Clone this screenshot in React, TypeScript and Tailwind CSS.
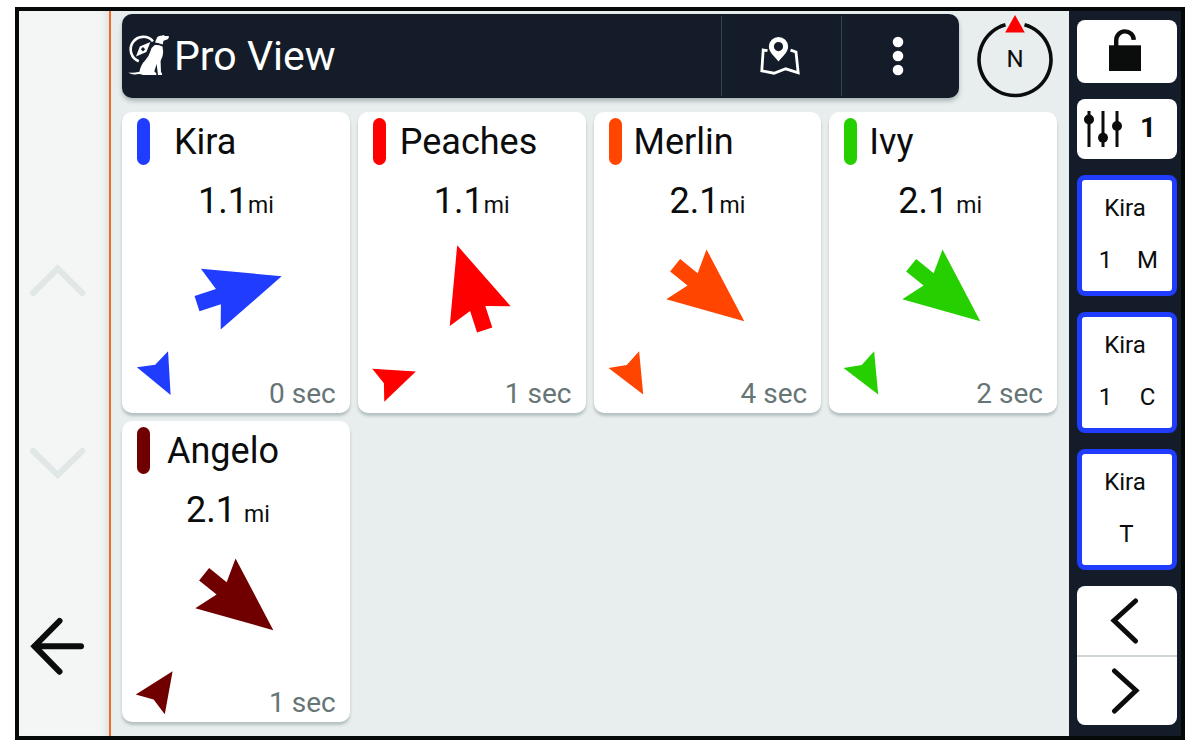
import React from 'react';

interface Dog {
  name: string;
  distance: string;
  updated: string;
  color: string;
  // degrees clockwise from straight up
  bearing: number;
  heading: number;
  nameClass: string;
  distanceClass: string;
}

interface QuickKey {
  label: string;
  codes: string[];
}

const dogs: Dog[] = [
  { name: 'Kira', distance: '1.1', updated: '0 sec', color: '#1f3cff', bearing: 72, heading: 153, nameClass: 'pl-6', distanceClass: '' },
  { name: 'Peaches', distance: '1.1', updated: '1 sec', color: '#ff0000', bearing: -18, heading: 70, nameClass: 'pl-3.5', distanceClass: '' },
  { name: 'Merlin', distance: '2.1', updated: '4 sec', color: '#ff4500', bearing: 129, heading: 151, nameClass: 'pl-3', distanceClass: '' },
  { name: 'Ivy', distance: '2.1', updated: '2 sec', color: '#26d000', bearing: 129, heading: 151, nameClass: 'pl-3', distanceClass: 'gap-2 pr-1.5' },
  { name: 'Angelo', distance: '2.1', updated: '1 sec', color: '#700000', bearing: 129, heading: 34, nameClass: 'pl-[17px]', distanceClass: 'gap-2 pr-4' },
];

const quickKeys: QuickKey[] = [
  { label: 'Kira', codes: ['1', 'M'] },
  { label: 'Kira', codes: ['1', 'C'] },
  { label: 'Kira', codes: ['T'] },
];

function DogLogo() {
  return (
    <svg viewBox="0 0 42 42" className="h-[42px] w-[42px] shrink-0" aria-hidden="true">
      <path d="M25 6.4 A12.6 12.6 0 1 0 10.8 26.2" fill="none" stroke="white" strokeWidth="2.6" />
      <path fillRule="evenodd" d="M22.4 7 L18.4 17 L8 21.4 L11.8 11.4 Z M15 12 L12.8 14.3 L15 16.6 L17.2 14.3 Z" fill="white" />
      <path d="M27 7.5 L29 2.5 Q30.5 .3 33.5 .8 L36 0 L36.5 1 L40.8 1 Q41.2 4 38.5 4.7 L35.5 5.8 L34.7 9.5 Q31 8 27 7.5 Z" fill="white" />
      <path
        d="M26.7 10 Q30.5 9.6 34.5 11.4 Q35.8 17 34.6 21 L32.6 26 L33 37 L34 38.5 V40 H30 L28.6 29 L26.3 36.5 L28.3 38.3 V40 H15 Q12 38.4 9 39.2 Q4 40.2 .3 37.6 Q6 38 11.5 36.8 Q12.5 30 17.5 25 Q21 21 22.3 16.5 Q23.5 12 26.7 10 Z"
        fill="white"
      />
    </svg>
  );
}

function MapPinIcon() {
  return (
    <svg viewBox="0 0 40 40" className="h-10 w-10" aria-hidden="true">
      <path
        d="M7.5 14.7 L3.2 14 L1.8 34.8 L14 37.2 L25.7 32.8 L38.2 36.8 L36 16 L30.5 14.2"
        fill="none"
        stroke="white"
        strokeWidth="2.8"
      />
      <path
        fillRule="evenodd"
        d="M18.5 1 A9.6 9.6 0 0 1 28.1 10.6 C28.1 16.5 22 21 18.5 25.6 C15 21 8.9 16.5 8.9 10.6 A9.6 9.6 0 0 1 18.5 1 Z M18.5 6 A4.6 4.6 0 1 0 18.5 15.2 A4.6 4.6 0 1 0 18.5 6 Z"
        fill="white"
      />
    </svg>
  );
}

function MoreIcon() {
  return (
    <svg viewBox="0 0 12 40" className="h-10 w-3" aria-hidden="true">
      <circle cx="6" cy="6" r="5.3" fill="white" />
      <circle cx="6" cy="20" r="5.3" fill="white" />
      <circle cx="6" cy="34" r="5.3" fill="white" />
    </svg>
  );
}

function Compass() {
  return (
    <div className="relative mr-1 h-[84px] w-[76px] shrink-0">
      <svg viewBox="0 0 76 84" className="h-full w-full" aria-hidden="true">
        <path d="M47.5 10.8 A36 36 0 1 1 28.5 10.8" fill="none" stroke="#0b0d0d" strokeWidth="3.6" />
        <path d="M38 1 L47.8 18.5 H28.2 Z" fill="#ff0000" />
      </svg>
      <span className="absolute inset-x-0 top-[31px] text-center text-2xl leading-7">N</span>
    </div>
  );
}

function BearingArrow({ color, angle }: { color: string; angle: number }) {
  return (
    <svg viewBox="-48 -48 96 96" className="mx-auto mt-[22px] block h-24 w-24 overflow-visible" aria-hidden="true">
      <path d="M0 -48 L32 26.5 L8 18.5 V41 H-8 V18.5 L-32 26.5 Z" fill={color} transform={`rotate(${angle})`} />
    </svg>
  );
}

function HeadingArrow({ color, angle }: { color: string; angle: number }) {
  return (
    <svg viewBox="-24 -24 48 48" className="mb-2 block h-12 w-12 overflow-visible" aria-hidden="true">
      <path d="M0 -19 L17.5 21 L0 15 L-17.5 21 Z" fill={color} transform={`rotate(${angle})`} />
    </svg>
  );
}

function DogCard({ dog }: { dog: Dog }) {
  return (
    <article className="rounded-[10px] bg-white pt-1.5 pb-[3px] shadow-[0_3px_3px_#b4c1c0]">
      <div className="flex items-center pl-[15px]">
        <span className="h-[47px] w-[13px] shrink-0 rounded-full" style={{ backgroundColor: dog.color }} />
        <h2 className={`text-[36px] leading-10 ${dog.nameClass}`}>{dog.name}</h2>
      </div>
      <p className={`mt-4 flex items-baseline justify-center text-[36px] leading-10 ${dog.distanceClass}`}>
        <span>{dog.distance}</span>
        <span className="text-[23px] leading-6">mi</span>
      </p>
      <BearingArrow color={dog.color} angle={dog.bearing} />
      <div className="mt-[15px] flex items-end justify-between pr-3.5 pl-4">
        <HeadingArrow color={dog.color} angle={dog.heading} />
        <span className="text-[28px] leading-8 text-[#667575]">{dog.updated}</span>
      </div>
    </article>
  );
}

function ScrollRail() {
  return (
    <nav className="flex w-[92px] shrink-0 flex-col items-start border-r-2 border-[#f26a25] bg-[#f4f6f5] pt-[253px] pl-[11px] shadow-[inset_-8px_0_8px_-6px_#d8dedd]">
      <button type="button" aria-label="Scroll up">
        <svg viewBox="0 0 56 32" className="block h-8 w-14" fill="none" stroke="#e1e7e6" strokeWidth="6" strokeLinecap="round">
          <path d="M3 29 L27.7 4.5 L52.3 29" />
        </svg>
      </button>
      <button type="button" aria-label="Scroll down" className="mt-[152px]">
        <svg viewBox="0 0 56 32" className="block h-8 w-14" fill="none" stroke="#e1e7e6" strokeWidth="6" strokeLinecap="round">
          <path d="M3 3 L27.7 27 L52.3 3" />
        </svg>
      </button>
      <button type="button" aria-label="Back" className="mt-[136px]">
        <svg viewBox="0 0 56 60" className="block h-[60px] w-14" fill="none" stroke="#0b0d0d" strokeWidth="6" strokeLinecap="round">
          <path d="M29.5 5 L4.5 30.2 L29.5 55.7" />
          <path d="M5 30.2 H51" />
        </svg>
      </button>
    </nav>
  );
}

function ControlRail() {
  return (
    <aside className="flex w-28 shrink-0 flex-col gap-4 bg-[#131c28] pt-[9px] pr-1 pl-2">
      <button type="button" aria-label="Unlock" className="flex h-[63px] items-center justify-center rounded-lg bg-white pr-1 pb-1">
        <svg viewBox="0 0 34 44" className="h-11 w-[34px]" aria-hidden="true">
          <path d="M8.2 19 V12.5 A8.8 8.8 0 0 1 25.8 11.8" fill="none" stroke="#0b0d0d" strokeWidth="4.4" />
          <path d="M1 17.3 H33 V43 H1 Z" fill="#0b0d0d" />
        </svg>
      </button>
      <button type="button" aria-label="Filter 1" className="flex h-[60px] items-center rounded-lg bg-white pb-0.5 pl-[7px]">
        <svg viewBox="0 0 40 40" className="h-10 w-10" aria-hidden="true">
          <path d="M5 3 V39 M19 3 V39 M33 3 V39" stroke="#0b0d0d" strokeWidth="3" />
          <circle cx="5" cy="11.5" r="5" fill="#0b0d0d" />
          <circle cx="19" cy="29.7" r="5" fill="#0b0d0d" />
          <circle cx="33" cy="18" r="5" fill="#0b0d0d" />
        </svg>
        <span className="ml-4 text-[28px] leading-8 font-bold">1</span>
      </button>
      {quickKeys.map((key, i) => (
        <button
          key={i}
          type="button"
          className="flex h-[121px] flex-col items-center rounded-lg border-[5px] border-[#1f3cff] bg-white pt-3.5 pr-1 text-2xl leading-7"
        >
          <span>{key.label}</span>
          <span className="mt-6 flex gap-5 pl-[3px]">
            {key.codes.map((code) => (
              <span key={code} className="w-[22px] text-center">{code}</span>
            ))}
          </span>
        </button>
      ))}
      <div className="flex flex-col divide-y-2 divide-[#cdd6d5] overflow-hidden rounded-lg bg-white">
        <button type="button" aria-label="Previous" className="flex h-[71px] items-center justify-center pr-1">
          <svg viewBox="0 0 30 46" className="h-[46px] w-[30px]" fill="none" stroke="#0b0d0d" strokeWidth="5" strokeLinecap="round">
            <path d="M25.5 3 L4 22.5 L25.5 43" />
          </svg>
        </button>
        <button type="button" aria-label="Next" className="flex h-[68px] items-center justify-center pr-1">
          <svg viewBox="0 0 30 46" className="h-[46px] w-[30px]" fill="none" stroke="#0b0d0d" strokeWidth="5" strokeLinecap="round">
            <path d="M4.5 3 L26 22.5 L4.5 43" />
          </svg>
        </button>
      </div>
    </aside>
  );
}

export default function App() {
  return (
    <div className="min-h-screen bg-white px-[15px] pt-[7px] pb-1.5 font-['Roboto',sans-serif] text-[#0b0d0d]">
      <div className="flex border-4 border-[#060909]">
        <ScrollRail />
        <main className="min-w-0 flex-1 bg-[#e8eded] pt-[3px] pr-3 pb-3.5 pl-[11px]">
          <div className="flex items-start gap-[18px]">
            <header className="flex h-[84px] flex-1 items-center rounded-[10px] bg-[#131c28] pl-1.5 text-white shadow-[0_3px_4px_#a9b5b6]">
              <DogLogo />
              <h1 className="flex-1 pl-1 text-[41px] leading-[48px]">Pro View</h1>
              <button type="button" aria-label="Map" className="flex h-20 w-[120px] items-center justify-center border-l border-[#344454] pr-1">
                <MapPinIcon />
              </button>
              <button type="button" aria-label="More options" className="flex h-20 w-[118px] items-center justify-center border-l border-[#344454] pr-1.5">
                <MoreIcon />
              </button>
            </header>
            <Compass />
          </div>
          <section className="mt-3.5 grid grid-cols-4 gap-2">
            {dogs.map((dog) => (
              <DogCard key={dog.name} dog={dog} />
            ))}
          </section>
        </main>
        <ControlRail />
      </div>
    </div>
  );
}
